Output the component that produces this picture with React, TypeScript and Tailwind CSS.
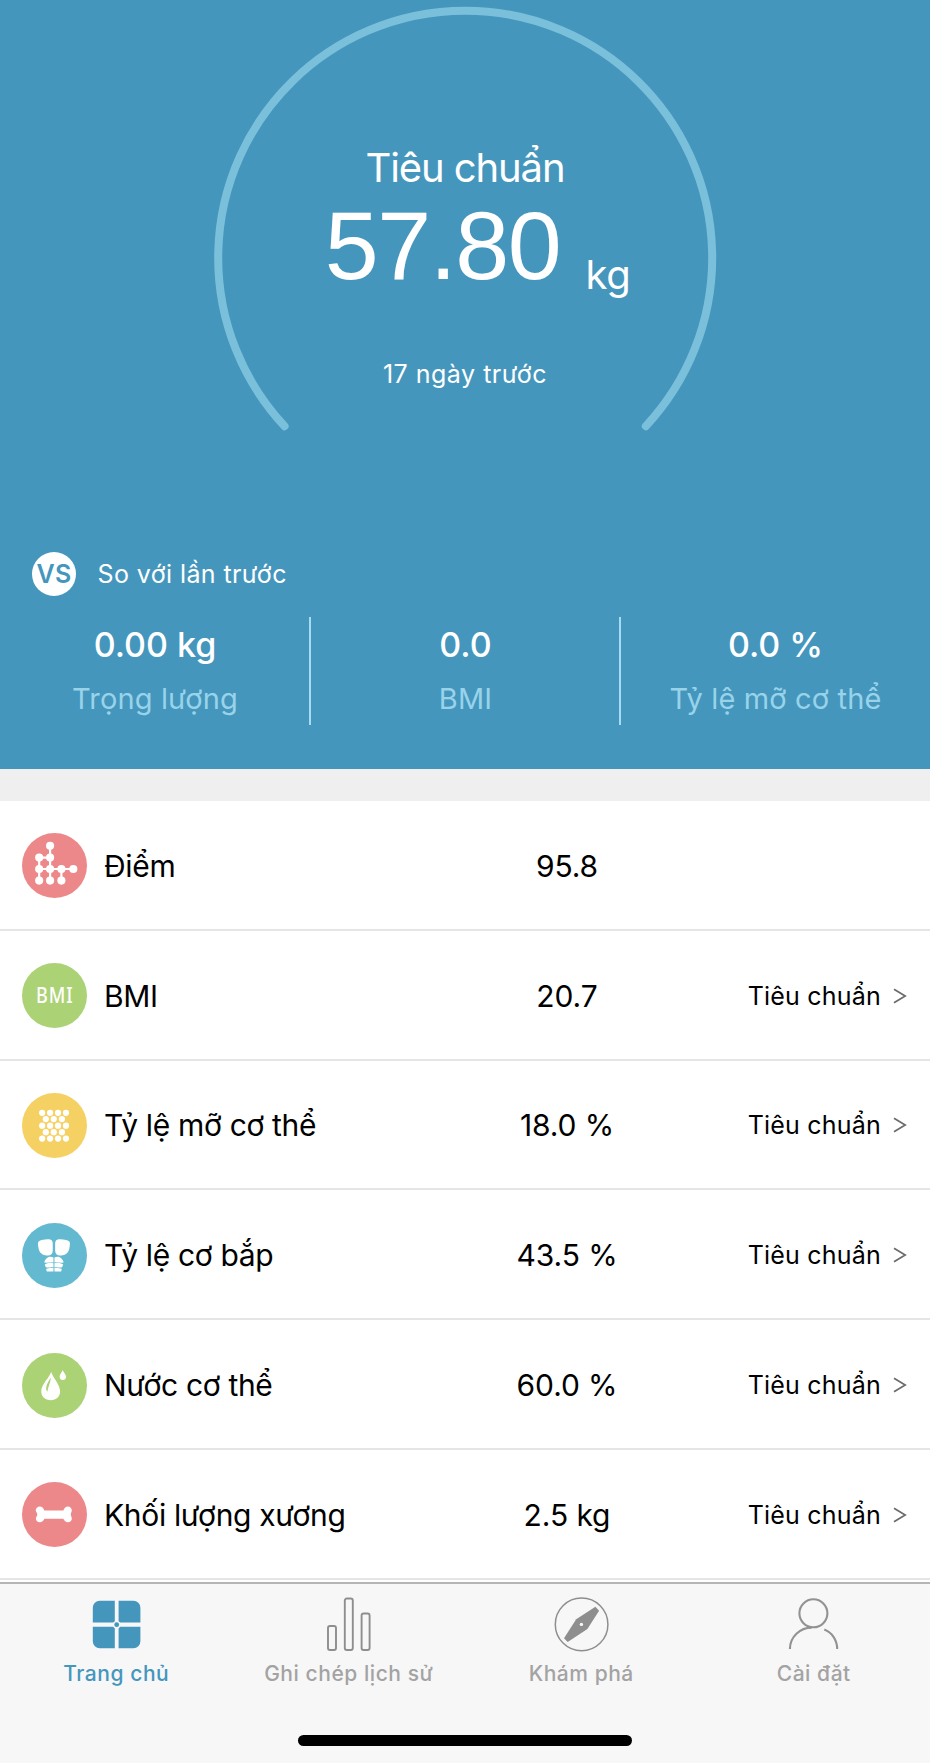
import type { ReactNode } from 'react'

interface Metric {
  key: string
  label: string
  value: string
  status?: string
  color: string
  icon: ReactNode
}

const SCORE_DOTS = [
  [28.3, 12.7],
  [17.3, 24.5], [28.3, 24.5],
  [17.3, 36], [28.3, 36], [39.7, 36], [51.7, 36],
  [17.3, 47.7], [28.3, 47.7], [39.7, 47.7],
]

const FAT_DOTS = [
  [20.3, 19.7], [28.3, 19.7], [36.3, 19.7], [44.3, 19.7],
  [24, 26], [32, 26], [40.2, 26],
  [20.3, 32.7], [28.3, 32.7], [36.3, 32.7], [44.3, 32.7],
  [24, 39.2], [32, 39.2], [40.2, 39.2],
  [20.3, 45.7], [28.3, 45.7], [36.3, 45.7], [44.3, 45.7],
]

function ScoreIcon() {
  return (
    <svg className="w-full h-full" viewBox="0 0 65 65" fill="white">
      <path d="M28.3 12.7V47.7M17.3 24.5H28.3M17.3 24.5V47.7M17.3 36H51.7M39.7 36V47.7" stroke="white" strokeWidth={2.2} fill="none" />
      {SCORE_DOTS.map(([x, y]) => <circle key={`${x}-${y}`} cx={x} cy={y} r={4.1} />)}
    </svg>
  )
}

function FatIcon() {
  return (
    <svg className="w-full h-full" viewBox="0 0 65 65" fill="white">
      {FAT_DOTS.map(([x, y]) => <circle key={`${x}-${y}`} cx={x} cy={y} r={3.15} />)}
    </svg>
  )
}

function MuscleIcon() {
  return (
    <svg className="w-full h-full" viewBox="0 0 65 65" fill="white">
      <path d="M20 17C23.5 16 27 16 28.4 16.5C30.3 17.1 31 18.6 31 21V27.5C31 30.8 29 32.6 26 32.6C22.5 32.6 18.8 31 17.5 28C16.6 25.8 16.1 22.5 16.1 20.4C16.1 18.4 17.6 17.6 20 17Z" />
      <path d="M44.4 17C40.9 16 37.4 16 36 16.5C34.1 17.1 33.4 18.6 33.4 21V27.5C33.4 30.8 35.4 32.6 38.4 32.6C41.9 32.6 45.6 31 46.9 28C47.8 25.8 48.3 22.5 48.3 20.4C48.3 18.4 46.8 17.6 44.4 17Z" />
      <path d="M31.7 34.6C29 32.8 24.5 33.2 22.4 39.2C25.5 41 28 38.6 31.7 39.6Z" />
      <path d="M32.7 34.6C35.4 32.8 39.9 33.2 42 39.2C38.9 41 36.4 38.6 32.7 39.6Z" />
      <path d="M31.7 40.2C29 39.4 25 40.2 22.9 41.6L24 44.4C26.5 45.2 28.6 44 31.7 44.5Z" />
      <path d="M32.7 40.2C35.4 39.4 39.4 40.2 41.5 41.6L40.4 44.4C37.9 45.2 35.8 44 32.7 44.5Z" />
      <path d="M31.7 45.2C29.4 44.8 26.4 45.2 24.3 46L25 48.6H31.7Z" />
      <path d="M32.7 45.2C35 44.8 38 45.2 40.1 46L39.4 48.6H32.7Z" />
    </svg>
  )
}

function WaterIcon() {
  return (
    <svg className="w-full h-full" viewBox="0 0 65 65" fill="white">
      <path d="M29.4 18.6C30.5 24 38.4 31 38.4 38.6C38.4 43.8 34.6 47.4 29 47.4C23.3 47.4 19.4 43.8 19.4 38.6C19.4 31 28.2 24 29.4 18.6Z" />
      <path d="M29 24.5C29 29.5 26.4 33 25.8 38.6C22.8 36.8 24.6 31 29 24.5Z" fill="#abd275" />
      <path d="M41 16.8C41.5 19 44.4 21 44.4 23.6C44.4 25.6 43 26.9 41.1 26.9C39.2 26.9 37.9 25.6 37.9 23.6C37.9 21 40.5 19 41 16.8Z" />
    </svg>
  )
}

function BoneIcon() {
  return (
    <svg className="w-full h-full" viewBox="0 0 65 65" fill="white">
      <path d="M22.5 28.4H41.7C42.6 26 44.2 24.4 46.2 24.4C48.6 24.4 50.2 26.2 50.2 28.3C50.2 29.9 49.2 30.8 49.2 32.4C49.2 34 50.2 34.9 50.2 36.5C50.2 38.7 48.6 40.3 46.2 40.3C44.2 40.3 42.6 39 41.7 36.8H22.5C21.6 39 20 40.3 18 40.3C15.6 40.3 14 38.7 14 36.5C14 34.9 15.4 34 15.4 32.4C15.4 30.8 13.8 29.9 13.8 28.3C13.8 26.2 15.6 24.4 18 24.4C20 24.4 21.6 26 22.5 28.4Z" />
    </svg>
  )
}

const METRICS: Metric[] = [
  { key: 'score', label: 'Điểm', value: '95.8', color: 'bg-[#ec8889]', icon: <ScoreIcon /> },
  {
    key: 'bmi',
    label: 'BMI',
    value: '20.7',
    status: 'Tiêu chuẩn',
    color: 'bg-[#abd275]',
    icon: <span className="font-['Noto_Sans',sans-serif] text-[21px] font-medium leading-none tracking-[1px] scale-x-[0.86] text-white">BMI</span>,
  },
  { key: 'fat', label: 'Tỷ lệ mỡ cơ thể', value: '18.0 %', status: 'Tiêu chuẩn', color: 'bg-[#f5d062]', icon: <FatIcon /> },
  { key: 'muscle', label: 'Tỷ lệ cơ bắp', value: '43.5 %', status: 'Tiêu chuẩn', color: 'bg-[#63b9d0]', icon: <MuscleIcon /> },
  { key: 'water', label: 'Nước cơ thể', value: '60.0 %', status: 'Tiêu chuẩn', color: 'bg-[#abd275]', icon: <WaterIcon /> },
  { key: 'bone', label: 'Khối lượng xương', value: '2.5 kg', status: 'Tiêu chuẩn', color: 'bg-[#ec8889]', icon: <BoneIcon /> },
]

const COMPARISON = [
  { label: 'Trọng lượng', value: '0.00 kg' },
  { label: 'BMI', value: '0.0' },
  { label: 'Tỷ lệ mỡ cơ thể', value: '0.0 %' },
]

const TABS = [
  {
    label: 'Trang chủ',
    active: true,
    icon: (
      <svg className="w-[54px] h-[54px]" viewBox="0 0 54 54" fill="#4596bd">
        <path d="M25.8 3.8V25.5H3.8V10.8A7 7 0 0 1 10.8 3.8Z" />
        <path d="M29.6 3.8V25.5H51.4V10.8A7 7 0 0 0 44.4 3.8Z" />
        <path d="M25.8 29.8V51.2H10.8A7 7 0 0 1 3.8 44.2V29.8Z" />
        <path d="M29.6 29.8V51.2H44.4A7 7 0 0 0 51.4 44.2V29.8Z" />
        <circle cx="27.7" cy="27.7" r="3.8" fill="#f7f7f7" />
        <circle cx="27.7" cy="27.7" r="2.4" />
      </svg>
    ),
  },
  {
    label: 'Ghi chép lịch sử',
    active: false,
    icon: (
      <svg className="w-[54px] h-[54px]" viewBox="0 0 54 54" fill="none" stroke="#8e8e8e" strokeWidth={1.9}>
        <rect x="6" y="29" width="8" height="24" rx="2" />
        <rect x="22.8" y="1.5" width="8" height="51.5" rx="2" />
        <rect x="39.6" y="16.5" width="8" height="36.5" rx="2" />
      </svg>
    ),
  },
  {
    label: 'Khám phá',
    active: false,
    icon: (
      <svg className="w-[54px] h-[54px] overflow-visible" viewBox="0 0 54 54" fill="none">
        <circle cx="27.6" cy="27.4" r="26.3" stroke="#8e8e8e" strokeWidth={1.5} />
        <path d="M41.4 9.8L45.1 13.7L33.4 32L13.7 45L10 41.2L22.2 22.2Z" fill="#8e8e8e" />
        <circle cx="27.4" cy="27.4" r="1.7" fill="#f7f7f7" />
      </svg>
    ),
  },
  {
    label: 'Cài đặt',
    active: false,
    icon: (
      <svg className="w-[54px] h-[54px]" viewBox="0 0 54 54" fill="none" stroke="#929292" strokeWidth={2.1}>
        <circle cx="26.4" cy="16.3" r="14" />
        <path d="M2.9 52C2.9 40 13.1 30.6 24.6 30.6M37.3 32.5C45.1 35.5 50.2 43.3 50.2 52" />
      </svg>
    ),
  },
]

function Gauge() {
  return (
    <div className="relative flex flex-col items-center h-[440px] pt-36">
      <svg className="absolute left-0 top-0 w-[930px] h-[440px]" viewBox="0 0 930 440" fill="none">
        <path
          d="M284.6 426.2A247 247 0 1 1 645.8 426.2"
          stroke="#7bc0db"
          strokeWidth={8}
          strokeLinecap="round"
        />
      </svg>
      <div className="text-[40px] leading-[48px] tracking-[-1.1px]">Tiêu chuẩn</div>
      <div className="flex mt-[5px] h-[98px] pl-[25px]">
        <span className="font-['Liberation_Sans',Arial,sans-serif] text-[97px] leading-[98px] tracking-[-1.4px]">57.80</span>
        <span className="ml-[25px] pt-[54px] text-[40px] leading-[48px] tracking-[-0.3px]">kg</span>
      </div>
      <div className="mt-[63px] text-[25px] leading-8 tracking-[0.5px]">17 ngày trước</div>
    </div>
  )
}

function MetricRow({ metric }: { metric: Metric }) {
  return (
    <div className="grid grid-cols-[450px_234px_1fr] items-center h-[129.8px] pt-[2px] border-b-2 border-[#e5e5e5] bg-white text-black">
      <div className="flex items-center pl-[22px]">
        <div className={`flex items-center justify-center w-[64.5px] h-[65px] shrink-0 rounded-full overflow-hidden ${metric.color}`}>
          {metric.icon}
        </div>
        <span className="ml-[17.5px] text-[30px] leading-9 tracking-[-0.33px] whitespace-nowrap">{metric.label}</span>
      </div>
      <div className="text-center text-[30px] leading-9 tracking-[-0.1px]">{metric.value}</div>
      {metric.status && (
        <div className="flex items-center justify-end pr-[23px]">
          <span className="text-[25px] leading-8 tracking-[0.2px]">{metric.status}</span>
          <svg className="ml-3 w-[14px] h-4" viewBox="0 0 14 16" fill="none" stroke="#6b6b6b" strokeWidth={1.7}>
            <path d="M1 1.2L12.2 8L1 14.8" />
          </svg>
        </div>
      )}
    </div>
  )
}

export default function App() {
  return (
    <div className="flex flex-col w-[930px] h-[1763px] overflow-hidden bg-white font-['Inter',sans-serif]">
      {/* Weight summary */}
      <header className="h-[769px] shrink-0 bg-[#4596bd] text-white">
        <Gauge />

        <div className="flex items-center h-11 mt-28 pl-8">
          <div className="flex items-center justify-center w-11 h-11 rounded-full bg-white text-[#4596bd] text-[25px] font-semibold leading-none tracking-[0.4px]">
            VS
          </div>
          <span className="ml-[21.5px] text-[25px] leading-8 tracking-[0.4px]">So với lần trước</span>
        </div>

        <div className="grid grid-cols-[311px_310px_309px] mt-[21px] h-[108px]">
          {COMPARISON.map((item, i) => (
            <div
              key={item.label}
              className={`flex flex-col items-center pt-[11px] ${i < 2 ? 'pl-px border-r-2 border-[#a5dcf1]' : ''}`}
            >
              <span className="text-[34px] leading-[34px] font-medium">{item.value}</span>
              <span className="mt-5 text-[29px] leading-[34px] tracking-[0.15px] text-[#98d3ea]">{item.label}</span>
            </div>
          ))}
        </div>
      </header>

      <div className="h-8 shrink-0 bg-[#efefef]" />

      {/* Body metrics */}
      <main className="h-[781px] shrink-0 overflow-hidden">
        {METRICS.map((metric) => (
          <MetricRow key={metric.key} metric={metric} />
        ))}
      </main>

      {/* Tab bar */}
      <nav className="flex-1 border-t-2 border-[#b5b5b5] bg-[#f7f7f7]">
        <div className="grid grid-cols-4 pt-[13px]">
          {TABS.map((tab) => (
            <div key={tab.label} className="flex flex-col items-center">
              {tab.icon}
              <span
                className={`mt-[11px] text-[21px] leading-6 font-medium tracking-[0.55px] ${
                  tab.active ? 'text-[#4596bd]' : 'text-[#a3a3a3]'
                }`}
              >
                {tab.label}
              </span>
            </div>
          ))}
        </div>
        <div className="mx-auto mt-[48.5px] w-[334px] h-[11px] rounded-full bg-black" />
      </nav>
    </div>
  )
}
